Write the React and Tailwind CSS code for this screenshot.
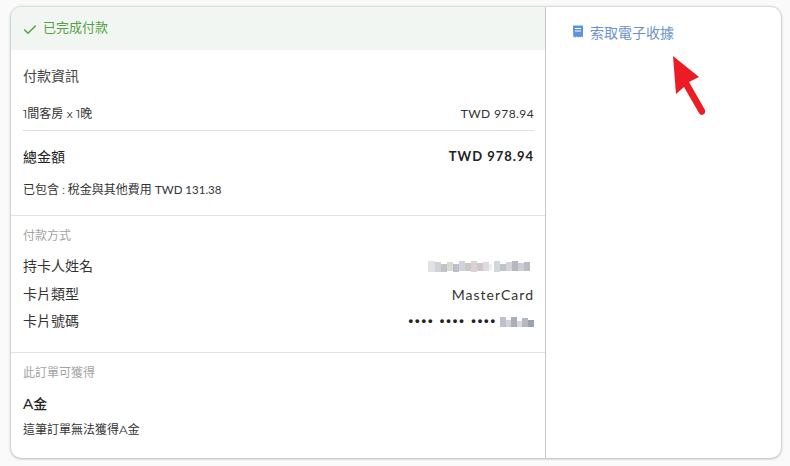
import React from 'react';
import { Check } from 'lucide-react';

function Mosaic({ cells, width }) {
  // pixelated redaction blocks
  return (
    <svg width={width} height="15" viewBox={`0 0 ${width} 15`} shapeRendering="crispEdges">
      {cells.map((c, i) => (
        <rect key={i} x={c[0]} y={c[1]} width={c[2]} height={c[3]} fill={c[4]} />
      ))}
    </svg>
  );
}

const nameCells = [
  [0, 2, 7, 11, '#dfe2e7'], [7, 3, 6, 10, '#cfd3d8'], [13, 5, 6, 8, '#bfc3c8'], [19, 3, 6, 9, '#d8dbcf'],
  [25, 5, 6, 8, '#bbc1c6'], [31, 2, 6, 10, '#d0d4da'], [37, 4, 6, 8, '#c6ccc1'], [43, 2, 6, 11, '#ddd1d4'],
  [49, 4, 6, 8, '#cdc7ce'], [55, 3, 6, 9, '#e2d9dd'], [61, 5, 3, 6, '#eceef0'], [66, 2, 6, 11, '#d2d7dc'],
  [72, 5, 6, 7, '#c0c4c8'], [78, 3, 6, 9, '#d2d4d9'], [84, 2, 6, 10, '#b4b9bd'], [90, 4, 6, 8, '#cacdd2'], [96, 3, 6, 9, '#b9bdc1'],
];

const numCells = [
  [0, 3, 6, 10, '#bcc1cb'], [6, 6, 5, 7, '#d0d2d8'], [11, 3, 6, 10, '#a9afb9'], [17, 7, 5, 6, '#d6d8dd'],
  [22, 4, 6, 9, '#b2b8c2'], [28, 6, 6, 7, '#9ca3af'],
];

function App() {
  return (
    <div className="relative h-[466px] w-[790px] overflow-hidden bg-[#fafafa] pt-[7px] pl-[11px] font-['Montserrat','Noto_Sans_CJK_TC','Liberation_Sans',sans-serif] text-[#333]">
      <div className="flex h-[451px] w-[770px] overflow-hidden rounded-[10px] bg-white shadow-[0_0_3px_rgba(0,0,0,0.28),0_1px_3px_rgba(0,0,0,0.16)]">
        {/* left column */}
        <div className="w-[535px] border-r border-[#c9c9c9] shrink-0">
          <div className="flex h-[43px] items-center bg-[#f1f6f2] pb-[1px] pl-[11px] text-[13px] text-[#55a244]">
            <Check size={16} strokeWidth={2.2} className="mr-[5px] mt-[3px]" />
            <span>已完成付款</span>
          </div>

          <div className="pl-[12px] pr-[11px]">
            <div className="pt-[16px] text-[14px] leading-[20px] text-[#444]">付款資訊</div>
            <div className="mt-[19px] flex h-[17px] items-center justify-between text-[12px] text-[#333]">
              <span>1間客房 x 1晚</span>
              <span className="font-['Lato','Noto_Sans_CJK_TC',sans-serif] text-[12px] tracking-[0.4px]">TWD 978.94</span>
            </div>
            <div className="mt-[8px] h-px bg-[#dedede]" />
            <div className="mt-[17px] flex h-[18px] items-center justify-between text-[14px] text-[#222]">
              <span>總金額</span>
              <span className="font-['Lato','Noto_Sans_CJK_TC',sans-serif] text-[13px] font-bold tracking-[1px]">TWD 978.94</span>
            </div>
            <div className="mt-[16px] h-[16px] text-[12px] leading-[16px] text-[#333]">
              已包含 : 稅金與其他費用 <span className="font-['Lato',sans-serif] text-[11.5px]">TWD 131.38</span>
            </div>
          </div>

          <div className="mt-[17px] border-t border-[#e2e2e2] pl-[12px] pr-[11px]">
            <div className="pt-[12px] text-[12px] leading-[16px] text-[#a3a3a3]">付款方式</div>
            <div className="mt-[13px] flex h-[18px] items-center justify-between text-[14px]">
              <span>持卡人姓名</span>
              <Mosaic cells={nameCells} width={106} />
            </div>
            <div className="mt-[10px] flex h-[18px] items-center justify-between text-[14px]">
              <span>卡片類型</span>
              <span className="font-['Lato',sans-serif] tracking-[1px]">MasterCard</span>
            </div>
            <div className="mt-[9px] flex h-[18px] items-center justify-between text-[14px]">
              <span>卡片號碼</span>
              <span className="flex items-center gap-[3px]">
                <span className="font-['Liberation_Sans',sans-serif] text-[13px] font-bold tracking-[1.9px] text-[#222]">•••• •••• ••••</span>
                <Mosaic cells={numCells} width={34} />
              </span>
            </div>
          </div>

          <div className="mt-[22px] border-t border-[#e2e2e2] pl-[12px] pr-[11px]">
            <div className="pt-[12px] text-[12px] leading-[16px] text-[#a3a3a3]">此訂單可獲得</div>
            <div className="mt-[14px] h-[18px] text-[14px] font-medium leading-[18px] text-[#222]">A金</div>
            <div className="mt-[9px] text-[12px] leading-[16px] text-[#333]">這筆訂單無法獲得A金</div>
          </div>
        </div>

        {/* right column */}
        <div className="flex-1 pl-[27px] pt-[16px]">
          <a className="flex items-center text-[14px] leading-[20px] text-[#6b93c9]">
            <svg width="10" height="13" viewBox="0 0 10 13" className="mr-[7px] -mt-[3px]">
              <path d="M0 0.5h10v12l-1.25-1-1.25 1-1.25-1-1.25 1-1.25-1-1.25 1-1.25-1-1 1z" fill="#5d93d8" />
              <path d="M2 3h6v1H2zM2 5.5h6v1H2z" fill="#fff" />
            </svg>
            索取電子收據
          </a>
        </div>
      </div>

      {/* red annotation arrow */}
      <svg className="absolute left-[665px] top-[50px]" width="50" height="70" viewBox="0 0 50 70">
        <path d="M8 6 L34 27 L24 32 L40 60 Q41 64 37 65 Q35 65 34 63 L19 37 L11 44 Z" fill="#ed1c24" />
      </svg>
    </div>
  );
}

export default App;
